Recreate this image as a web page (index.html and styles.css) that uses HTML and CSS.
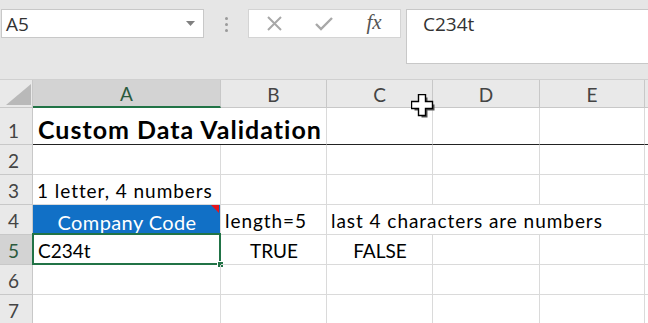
FILE: index.html
```html
<!DOCTYPE html>
<html lang="en">
<head>
    <meta charset="UTF-8">
    <title>Custom Data Validation</title>
    <link rel="stylesheet" href="styles.css">
</head>
<body>
    <div class="ribbon">
        <div class="namebox">
            <span>A5</span>
            <svg class="drop" width="9" height="5" viewBox="0 0 9 5"><path d="M0 0h9L4.5 5z" fill="#808080"/></svg>
        </div>
        <div class="grip"><i></i><i></i><i></i></div>
        <div class="fxbar">
            <span class="btn">
                <svg width="15" height="15" viewBox="0 0 15 15"><path d="M1 1l13 13M14 1L1 14" stroke="#a8a8a8" stroke-width="2" fill="none"/></svg>
            </span>
            <span class="btn">
                <svg width="18" height="14" viewBox="0 0 18 14"><path d="M1 7l5 5L17 1" stroke="#a8a8a8" stroke-width="2.4" fill="none"/></svg>
            </span>
            <span class="btn fx">fx</span>
        </div>
        <div class="formula">C234t</div>
    </div>

    <div class="sheet">
        <div class="c h corner">
            <svg width="25" height="21" viewBox="0 0 25 21"><path d="M25 0v21H0z" fill="#b9b9b9"/></svg>
        </div>
        <div class="c h col sel-col">A</div>
        <div class="c h col">B</div>
        <div class="c h col">C</div>
        <div class="c h col">D</div>
        <div class="c h col">E</div>
        <div class="c h col"></div>

        <div class="c h row">1</div>
        <div class="c title span2 ruled">Custom Data Validation</div>
        <div class="c ruled"></div>
        <div class="c ruled"></div>
        <div class="c ruled"></div>
        <div class="c ruled last"></div>

        <div class="c h row">2</div>
        <div class="c"></div><div class="c"></div><div class="c"></div><div class="c"></div><div class="c"></div><div class="c last"></div>

        <div class="c h row">3</div>
        <div class="c wide">1 letter, 4 numbers</div>
        <div class="c"></div><div class="c"></div><div class="c"></div><div class="c"></div><div class="c last"></div>

        <div class="c h row">4</div>
        <div class="c code">Company Code</div>
        <div class="c wide">length=5</div>
        <div class="c wide span3">last 4 characters are numbers</div>
        <div class="c last"></div>

        <div class="c h row sel-row">5</div>
        <div class="c active">C234t</div>
        <div class="c mid">TRUE</div>
        <div class="c mid">FALSE</div>
        <div class="c"></div><div class="c"></div><div class="c last"></div>

        <div class="c h row">6</div>
        <div class="c"></div><div class="c"></div><div class="c"></div><div class="c"></div><div class="c"></div><div class="c last"></div>

        <div class="c h row">7</div>
        <div class="c"></div><div class="c"></div><div class="c"></div><div class="c"></div><div class="c"></div><div class="c last"></div>
    </div>

    <svg class="cursor" width="24" height="24" viewBox="0 0 24 24">
        <path d="M9 2h6v7h7v6h-7v7H9v-7H2V9h7z" fill="#555" transform="translate(1.5 1.5)"/>
        <path d="M7.5 0.5h7v7h7v7h-7v7h-7v-7h-7v-7h7z" fill="#fff" stroke="#000" stroke-width="1.4"/>
    </svg>
</body>
</html>
```

FILE: styles.css
```css
body {
    margin: 0;
    width: 648px;
    height: 323px;
    overflow: hidden;
    position: relative;
    background: #fff;
    font-family: Lato, "Noto Sans", sans-serif;
}

/* formula bar strip */
.ribbon {
    height: 80px;
    box-sizing: border-box;
    padding-top: 9px;
    background: #e6e6e6;
    display: flex;
    align-items: flex-start;
}
.namebox {
    width: 203px;
    height: 29px;
    margin-left: 1px;
    box-sizing: border-box;
    background: #fff;
    border: 1px solid #c8c8c8;
    display: flex;
    align-items: center;
    justify-content: space-between;
    padding: 0 8px 0 4px;
    font-family: "Open Sans", sans-serif;
    font-size: 19px;
    color: #333;
}
.grip {
    width: 44px;
    display: flex;
    flex-direction: column;
    align-items: center;
    gap: 3px;
    padding-top: 8px;
}
.grip i {
    display: block;
    width: 3px;
    height: 3px;
    border-radius: 50%;
    background: #9a9a9a;
}
.fxbar {
    width: 153px;
    height: 29px;
    box-sizing: border-box;
    background: #fff;
    border: 1px solid #d4d4d4;
    display: flex;
    align-items: center;
}
.btn {
    width: 50px;
    height: 100%;
    display: flex;
    align-items: center;
    justify-content: center;
}
.fx {
    font-family: "Liberation Serif", serif;
    font-style: italic;
    font-size: 21px;
    color: #555;
    padding-bottom: 2px;
    box-sizing: border-box;
}
.formula {
    flex: 1;
    margin-left: 5px;
    height: 55px;
    box-sizing: border-box;
    background: #fff;
    border: 1px solid #c8c8c8;
    border-right: none;
    padding: 1px 0 0 16px;
    font-family: "Open Sans", sans-serif;
    font-size: 19px;
    line-height: 26px;
    color: #333;
}

/* grid */
.sheet {
    display: grid;
    grid-template-columns: 33px 188px 106px 106px 107px 105px 1fr;
    grid-template-rows: 28px 37px repeat(6, 30px);
    border-top: 1px solid #d0d0d0;
    margin-top: -1px;
}
.c {
    box-sizing: border-box;
    border-right: 1px solid #dadada;
    border-bottom: 1px solid #dadada;
    display: flex;
    align-items: flex-end;
    padding: 0 4px 2px 5px;
    font-size: 19px;
    line-height: 22px;
    color: #000;
    white-space: nowrap;
    position: relative;
}
.wide {
    letter-spacing: 0.95px;
    padding-left: 4px;
}
.last {
    border-right: none;
}
.h {
    background: #e9e9e9;
    border-color: #c8c8c8;
    color: #444;
    justify-content: center;
}
.col {
    align-items: center;
    padding: 2px 0 0;
}
.row {
    padding: 0 5px 2px 0;
}
.corner {
    align-items: flex-end;
    justify-content: flex-end;
    padding: 0 1px 2px 0;
}
.sel-col {
    background: #d3d3d3;
    border-bottom: 2px solid #217346;
    color: #2b5a3d;
}
.sel-row {
    background: #d3d3d3;
    color: #2b5a3d;
}
.span2 {
    grid-column: span 2;
}
.span3 {
    grid-column: span 3;
}
.title {
    font-weight: bold;
    font-size: 25px;
    line-height: 28px;
    letter-spacing: 1px;
    padding-bottom: 1px;
}
.ruled {
    border-bottom-color: #222;
}
.code {
    background: #1170c6;
    color: #fff;
    font-size: 20px;
    letter-spacing: 0.4px;
    justify-content: center;
    padding-bottom: 1px;
}
.code::after {
    content: "";
    position: absolute;
    top: 0;
    right: 1px;
    border-top: 8px solid #e8141b;
    border-left: 8px solid transparent;
}
.mid {
    justify-content: center;
}
.active::before {
    content: "";
    position: absolute;
    top: -2px;
    left: -1px;
    right: -1px;
    bottom: -1px;
    border: 2px solid #217346;
}
.active::after {
    content: "";
    position: absolute;
    right: -4px;
    bottom: -4px;
    width: 5px;
    height: 5px;
    background: #217346;
    border: 1px solid #fff;
}

.cursor {
    position: absolute;
    left: 411px;
    top: 94px;
}
```
